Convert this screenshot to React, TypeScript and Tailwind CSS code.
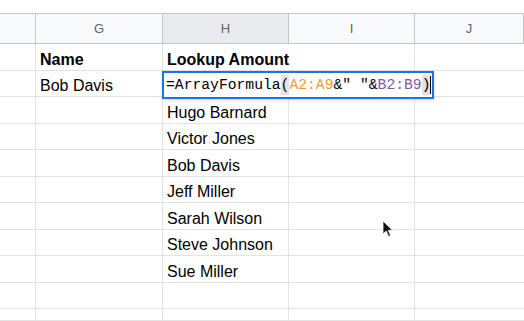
const colW = ['w-[36px]', 'w-[127px]', 'w-[126px]', 'w-[126px]', 'w-[109px]'];

const rows: [string, string][] = [
  ['Name', 'Lookup Amount'],
  ['Bob Davis', ''],
  ['', 'Hugo Barnard'],
  ['', 'Victor Jones'],
  ['', 'Bob Davis'],
  ['', 'Jeff Miller'],
  ['', 'Sarah Wilson'],
  ['', 'Steve Johnson'],
  ['', 'Sue Miller'],
  ['', ''],
  ['', ''],
];

function HeaderRow() {
  const labels = ['', 'G', 'H', 'I', 'J'];
  return (
    <div className="flex h-[31px] border-t border-b border-[#c4c7c5]">
      {labels.map((l, i) => (
        <div
          key={i}
          className={`${colW[i]} shrink-0 flex items-center justify-center border-r border-[#c4c7c5] text-[13px] text-[#5f6368] ${
            l === 'H' ? 'bg-[#e8eaed]' : 'bg-[#f8f9fa]'
          }`}
        >
          {l}
        </div>
      ))}
    </div>
  );
}

export default function App() {
  return (
    <div className="relative w-[524px] h-[321px] overflow-hidden bg-white font-['Liberation_Sans',Arial,sans-serif] text-black">
      <div className="h-[13px]" />
      <HeaderRow />

      {rows.map(([g, h], r) => (
        <div
          key={r}
          className={`flex ${r === rows.length - 1 ? 'h-[12px]' : r % 2 === 0 ? 'h-[27px]' : 'h-[26px]'}`}
        >
          <div className={`${colW[0]} shrink-0 border-r border-b border-[#e2e3e3]`} />
          <div
            className={`${colW[1]} shrink-0 flex items-end pl-[4px] pb-[1px] border-r border-b border-[#e2e3e3] text-[16px] leading-[18px] whitespace-nowrap ${
              r === 0 ? 'font-bold' : ''
            }`}
          >
            {g}
          </div>
          <div
            className={`${colW[2]} shrink-0 relative z-10 flex items-end pl-[4px] pb-[1px] border-b border-[#e2e3e3] text-[16px] leading-[18px] whitespace-nowrap ${
              r === 0 ? 'font-bold' : 'border-r'
            }`}
          >
            {h}
          </div>
          <div className={`${colW[3]} shrink-0 border-r border-b border-[#e2e3e3]`} />
          <div className={`${colW[4]} shrink-0 border-b border-[#e2e3e3]`} />
        </div>
      ))}

      {/* cell editor */}
      <div className="absolute left-[162px] top-[71px] w-[272px] h-[28px] z-20 bg-white border-2 border-[#1a73e8] flex items-center pl-[2px] font-['Liberation_Mono',monospace] text-[14.7px] leading-[20px] whitespace-nowrap shadow-[0_1px_3px_rgba(0,0,0,0.15)]">
        <span>=ArrayFormula</span>
        <span className="bg-[#e3e3e3]">(</span>
        <span className="text-[#f09b2c]">A2:A9</span>
        <span>&amp;"&nbsp;"&amp;</span>
        <span className="text-[#8a57a6]">B2:B9</span>
        <span className="bg-[#e3e3e3]">)</span>
        <span className="inline-block w-px h-[18px] bg-black" />
      </div>

      {/* mouse pointer */}
      <svg className="absolute left-[382px] top-[220px] z-20" width="12" height="18" viewBox="0 0 12 18">
        <path d="M1 1 L1 14 L4.2 11 L6.6 16.5 L8.6 15.6 L6.3 10.3 L10.6 10.3 Z" fill="#111" stroke="#fff" strokeWidth="0.8" />
      </svg>
    </div>
  );
}
